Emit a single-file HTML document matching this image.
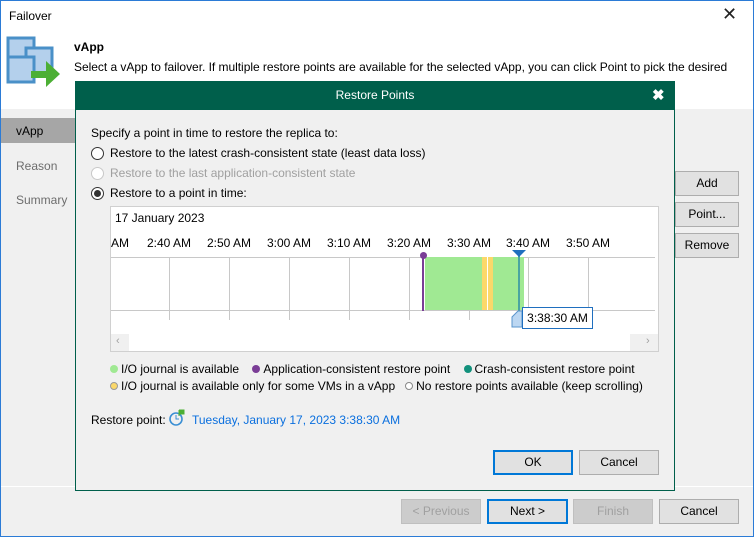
<!DOCTYPE html>
<html><head><style>
*{margin:0;padding:0;box-sizing:border-box}
body{width:754px;height:537px;overflow:hidden;font-family:"Liberation Sans",sans-serif;font-size:12px;color:#000;position:relative;background:#f0f0f0}
.a{position:absolute}
.btn{position:absolute;background:#e1e1e1;border:1px solid #adadad;text-align:center;line-height:22px;font-size:12px}
.dis{background:#cccccc;border-color:#bfbfbf;color:#a0a0a0}
.foc{border:2px solid #0078d7;line-height:20px}
.rad{position:absolute;width:13px;height:13px;border:1px solid #333;border-radius:50%;background:#fff}
.v{position:absolute;top:257px;width:1px;height:63px;background:#c8c8c8}
.tl{position:absolute;top:236px;font-size:12px;width:60px;text-align:center}
.dot{display:inline-block;width:8px;height:8px;border-radius:50%;margin-right:3px;vertical-align:0}
</style></head><body>
<div class="a" style="left:0;top:0;width:754px;height:537px;border:1px solid #2b7bd6"></div>
<div class="a" style="left:1px;top:1px;width:752px;height:108px;background:#fff"></div>
<div class="a" style="left:9px;top:9px;font-size:12px">Failover</div>
<div class="a" style="left:722px;top:4px;font-size:18px;font-weight:300;color:#222">✕</div>
<svg class="a" style="left:6px;top:36px" width="56" height="52">
<rect x="2" y="2" width="26" height="25" fill="#b4d0ec" stroke="#4a90c8" stroke-width="3"/>
<rect x="20" y="12" width="26" height="25" fill="#b4d0ec" stroke="#4a90c8" stroke-width="3"/>
<rect x="2" y="21" width="26" height="25" fill="#b4d0ec" stroke="#4a90c8" stroke-width="3"/>
<polygon points="25,35 40,35 40,25 54,38 40,51 40,42 25,42" fill="#4caf35"/>
</svg>
<div class="a" style="left:74px;top:40px;font-weight:bold;font-size:12px">vApp</div>
<div class="a" style="left:74px;top:60px;font-size:12px;white-space:nowrap;letter-spacing:-0.03px">Select a vApp to failover. If multiple restore points are available for the selected vApp, you can click Point to pick the desired</div>
<div class="a" style="left:1px;top:118px;width:74px;height:25px;background:#a6a6a6"></div>
<div class="a" style="left:16px;top:124px">vApp</div>
<div class="a" style="left:16px;top:159px;color:#6d6d6d">Reason</div>
<div class="a" style="left:16px;top:193px;color:#6d6d6d">Summary</div>
<div class="btn" style="left:675px;top:171px;width:64px;height:25px">Add</div>
<div class="btn" style="left:675px;top:202px;width:64px;height:25px">Point...</div>
<div class="btn" style="left:675px;top:233px;width:64px;height:25px">Remove</div>
<div class="a" style="left:1px;top:486px;width:752px;height:1px;background:#fff"></div>
<div class="btn dis" style="left:401px;top:499px;width:80px;height:25px">&lt; Previous</div>
<div class="btn foc" style="left:487px;top:499px;width:81px;height:25px">Next &gt;</div>
<div class="btn dis" style="left:573px;top:499px;width:80px;height:25px">Finish</div>
<div class="btn" style="left:659px;top:499px;width:80px;height:25px">Cancel</div>
<!-- dialog -->
<div class="a" style="left:75px;top:81px;width:600px;height:410px;background:#f0f0f0;border:1px solid #005f4b"></div>
<div class="a" style="left:75px;top:81px;width:600px;height:29px;background:#005f4b;color:#fff;text-align:center;line-height:29px">Restore Points</div>
<div class="a" style="left:652px;top:86px;color:#fff;font-size:15px;font-weight:bold">✖</div>
<div class="a" style="left:91px;top:126px">Specify a point in time to restore the replica to:</div>
<div class="rad" style="left:91px;top:147px"></div><div class="a" style="left:110px;top:146px">Restore to the latest crash-consistent state (least data loss)</div>
<div class="rad" style="left:91px;top:167px;border-color:#c8c8c8"></div><div class="a" style="left:110px;top:166px;color:#a0a0a0">Restore to the last application-consistent state</div>
<div class="rad" style="left:91px;top:187px"></div><div class="a" style="left:94px;top:190px;width:7px;height:7px;border-radius:50%;background:#333"></div><div class="a" style="left:110px;top:186px">Restore to a point in time:</div>
<div class="a" style="left:110px;top:206px;width:549px;height:146px;background:#fff;border:1px solid #d0d0d0"></div>
<div class="a" style="left:115px;top:211px">17 January 2023</div>
<div class="a" style="left:111px;top:257px;width:544px;height:1px;background:#c8c8c8"></div>
<div class="a" style="left:111px;top:310px;width:544px;height:1px;background:#c8c8c8"></div>
<div class="v" style="left:169px"></div><div class="v" style="left:229px"></div><div class="v" style="left:289px"></div><div class="v" style="left:349px"></div><div class="v" style="left:409px"></div><div class="v" style="left:469px"></div><div class="v" style="left:528px"></div><div class="v" style="left:588px"></div>
<div class="a" style="left:111px;top:236px">AM</div>
<div class="tl" style="left:139px">2:40 AM</div><div class="tl" style="left:199px">2:50 AM</div><div class="tl" style="left:259px">3:00 AM</div><div class="tl" style="left:319px">3:10 AM</div><div class="tl" style="left:379px">3:20 AM</div><div class="tl" style="left:439px">3:30 AM</div><div class="tl" style="left:498px">3:40 AM</div><div class="tl" style="left:558px">3:50 AM</div>
<div class="a" style="left:425px;top:257px;width:99px;height:53px;background:#a0e993"></div>
<div class="a" style="left:482px;top:257px;width:5px;height:53px;background:#fbd86a"></div>
<div class="a" style="left:487px;top:257px;width:1px;height:53px;background:#fff"></div>
<div class="a" style="left:488px;top:257px;width:5px;height:53px;background:#fbd86a"></div>
<div class="a" style="left:422px;top:256px;width:2px;height:55px;background:#7a3d96"></div>
<div class="a" style="left:420px;top:252px;width:7px;height:7px;border-radius:50%;background:#7a3d96"></div>
<div class="a" style="left:518px;top:256px;width:2px;height:55px;background:#4aa5a0"></div>
<svg class="a" style="left:512px;top:250px" width="14" height="8"><polygon points="0,0 14,0 7,7" fill="#1f6fbf"/></svg>
<svg class="a" style="left:511px;top:310px" width="12" height="18"><polygon points="1,17 1,7 7,1 11,1 11,17" fill="#bcd7f2" stroke="#5a94cc"/></svg>
<div class="a" style="left:522px;top:307px;width:71px;height:22px;background:#fff;border:1px solid #1f6fbf;line-height:20px;text-align:center">3:38:30 AM</div>
<div class="a" style="left:111px;top:334px;width:547px;height:17px;background:#f0f0f0"></div>
<div class="a" style="left:129px;top:334px;width:501px;height:17px;background:#fff"></div>
<div class="a" style="left:116px;top:335px;color:#a0a0a0;font-size:11px">‹</div>
<div class="a" style="left:646px;top:335px;color:#a0a0a0;font-size:11px">›</div>
<div class="a" style="left:110px;top:362px;white-space:nowrap"><span class="dot" style="background:#a0e993"></span>I/O journal is available &nbsp;&nbsp;&nbsp;<span class="dot" style="background:#7a3d96"></span>Application-consistent restore point &nbsp;&nbsp;&nbsp;<span class="dot" style="background:#12917c"></span>Crash-consistent restore point</div>
<div class="a" style="left:110px;top:379px;white-space:nowrap"><span class="dot" style="background:#fbd86a;border:1px solid #999"></span>I/O journal is available only for some VMs in a vApp &nbsp;&nbsp;<span class="dot" style="background:#fff;border:1px solid #888"></span>No restore points available (keep scrolling)</div>
<div class="a" style="left:91px;top:413px">Restore point:</div>
<svg class="a" style="left:168px;top:409px" width="18" height="18"><circle cx="8" cy="10" r="6" fill="none" stroke="#3b8fd4" stroke-width="1.6"/><path d="M8 6 V10 H11" stroke="#3b8fd4" fill="none"/><path d="M11 1 V7 M11 1 H16 V5 H11" stroke="#4caf35" fill="#4caf35"/></svg>
<div class="a" style="left:192px;top:413px;color:#0a6fde">Tuesday, January 17, 2023 3:38:30 AM</div>
<div class="btn foc" style="left:493px;top:450px;width:80px;height:25px">OK</div>
<div class="btn" style="left:579px;top:450px;width:80px;height:25px">Cancel</div>
</body></html>
